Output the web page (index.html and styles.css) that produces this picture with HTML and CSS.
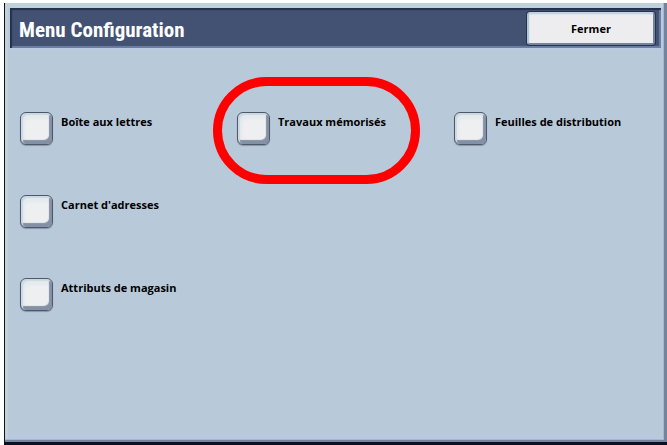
FILE: index.html
```
<!DOCTYPE html>
<html lang="fr">
<head>
<meta charset="utf-8">
<title>Menu Configuration</title>
<link rel="stylesheet" href="styles.css">
</head>
<body>
<main class="panel">
  <header class="titlebar">
    <h1 class="title">Menu Configuration</h1>
    <button class="close" type="button">Fermer</button>
  </header>
  <div class="options">
    <button class="option" type="button"><span class="key"></span><span class="label">Boîte aux lettres</span></button>
    <button class="option highlighted" type="button"><span class="key"></span><span class="label">Travaux mémorisés</span></button>
    <button class="option" type="button"><span class="key"></span><span class="label">Feuilles de distribution</span></button>
    <button class="option first" type="button"><span class="key"></span><span class="label">Carnet d'adresses</span></button>
    <button class="option first" type="button"><span class="key"></span><span class="label">Attributs de magasin</span></button>
  </div>
</main>
</body>
</html>
```
FILE: styles.css
```
*,
*::after {
  box-sizing: border-box;
}

body {
  margin: 0;
  padding: 3px 0 0 4px;
  min-height: 100vh;
  display: flex;
  background: #fff;
  font-family: "Open Sans", "Noto Sans", sans-serif;
}

.panel {
  flex: 1;
  border-left: 1px solid #10131c;
  border-bottom: 3px solid #0c1122;
  background: #b8cada;
  box-shadow:
    inset -3px -2px 0 #75849d,
    inset -4px -3px 0 #a9b6cc,
    inset 3px 5px 0 #bfd2d9,
    inset 0 -9px 6px -4px #b9c6e2;
  padding: 5px 6px 0 5px;
}

.titlebar {
  display: flex;
  align-items: center;
  justify-content: space-between;
  height: 40px;
  padding: 0 6px 0 9px;
  background: #435273;
  box-shadow:
    inset 2px 2px 1px #243050,
    inset -2px -2px 1px #6d7fa3,
    0 2px 0 #b9cbe3,
    2px 2px 0 #b9cbe3;
}

.title {
  margin: 0;
  padding-top: 3px;
  color: #fff;
  font: bold 21px/28px "Roboto Condensed", "Liberation Sans Narrow", sans-serif;
}

.close {
  width: 128px;
  height: 33px;
  padding: 2px 0 0;
  border: 2px solid;
  border-color: #c4d2df #75849d #75849d #b3c4d5;
  border-radius: 3px;
  background: #ededef;
  box-shadow: 0 0 0 1px #26334f, inset 1px 1px 1px #dbe5ec;
  color: #000;
  font: bold 11px/16px "Open Sans", "Noto Sans", sans-serif;
}

.options {
  display: grid;
  grid-template-columns: repeat(3, 1fr);
  grid-auto-rows: 33px;
  gap: 50px 10px;
  padding: 64px 0 0 10px;
}

.first {
  grid-column: 1;
}

.option {
  position: relative;
  display: flex;
  align-items: flex-start;
  gap: 8px;
  padding: 0;
  border: 0;
  background: none;
  color: #000;
  font: bold 11px/16px "Open Sans", "Noto Sans", sans-serif;
  text-align: left;
}

.key {
  flex: none;
  width: 33px;
  height: 33px;
  border: 1px solid #4c586c;
  border-radius: 6px;
  background: #eeeff0;
  box-shadow:
    inset 2px 2px 1px #ccd9e0,
    inset -3px -4px 1px #8490a5,
    inset 4px 6px 2px #e3ebee,
    0 1px 1px #8795ab;
}

.label {
  padding-top: 2px;
  white-space: nowrap;
}

.highlighted::after {
  content: "";
  position: absolute;
  top: -35px;
  left: -24px;
  width: 207px;
  height: 107px;
  border: 9px solid #f00;
  border-radius: 54px;
}
```
